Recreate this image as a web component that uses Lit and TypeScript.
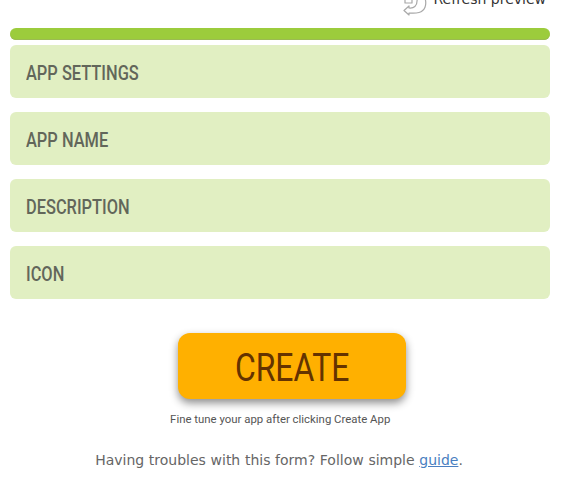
import { LitElement, html, css } from "lit";
import { customElement } from "lit/decorators.js";

@customElement("app-root")
export class AppRoot extends LitElement {
  static styles = css`
    :host { display: block; width: 570px; height: 498px; overflow: hidden; background: #fff; font-family: "DejaVu Sans", sans-serif; }
    .wrap { padding: 0 20px 0 10px; display: flex; flex-direction: column; }
    .refresh { height: 38px; margin-top: -10px; display: flex; justify-content: flex-end; align-items: flex-start; gap: 5px; padding-right: 4px; font-size: 14px; color: #333; line-height: 16px; }
    .refresh svg { flex: none; }
    .refresh span { padding-top: 1px; }
    .bar { height: 12px; border-radius: 6px; background: #9ccc3c; box-shadow: inset 0 -1px 0 #9bbb52; margin-bottom: 5px; }
    .rows { display: flex; flex-direction: column; gap: 14px; }
    .row { height: 53px; border-radius: 6px; background: #e1efc2; display: flex; align-items: center; padding: 2px 0 0 16px; box-sizing: border-box; font-family: Roboto, sans-serif; font-size: 20px; font-weight: 500; color: #62665a; }
    .row span { display: inline-block; transform: scaleX(0.82); transform-origin: left center; white-space: nowrap; }
    .btn { align-self: center; margin: 34px 0 0 24px; width: 228px; height: 66px; border-radius: 12px; background: #ffb000; box-shadow: 0 4px 8px rgba(0,0,0,.45); display: flex; align-items: center; justify-content: center; padding-top: 3px; box-sizing: border-box; font-family: Roboto, sans-serif; font-size: 38px; color: #643300; }
    .btn span { display: inline-block; transform: scaleX(0.84); }
    .hint { text-align: center; margin-top: 13px; font-family: Roboto, sans-serif; font-size: 11.5px; line-height: 14px; color: #555; }
    .hint span { display: inline-block; transform: scaleX(0.99); }
    .foot { text-align: center; margin-top: 25px; padding-right: 2px; font-size: 14px; line-height: 18px; color: #666; word-spacing: 0.2px; }
    .foot a { color: #4a7fc1; text-decoration: underline; }
  `;
  render() {
    return html`<div class="wrap">
      <div class="refresh">
        <svg width="27" height="27" viewBox="0 0 27 27" fill="#fff" stroke="#a8a8a8" stroke-width="1.2" stroke-linejoin="round">
          <path d="M24 8 C26 15 24 21 18 22.5 C14 23.5 11 23 8 23 L8 25 L3 20.5 L8 16 L8 18 C12 18.5 17 17 16 8" />
          <path d="M4 9 L4 13 L11 13 L11 9" fill="none" />
        </svg>
        <span>Refresh preview</span>
      </div>
      <div class="bar"></div>
      <div class="rows">
        ${["APP SETTINGS", "APP NAME", "DESCRIPTION", "ICON"].map((t) => html`<div class="row"><span>${t}</span></div>`)}
      </div>
      <div class="btn"><span>CREATE</span></div>
      <div class="hint"><span>Fine tune your app after clicking Create App</span></div>
      <div class="foot">Having troubles with this form? Follow simple <a href="#">guide</a>.</div>
    </div>`;
  }
}
